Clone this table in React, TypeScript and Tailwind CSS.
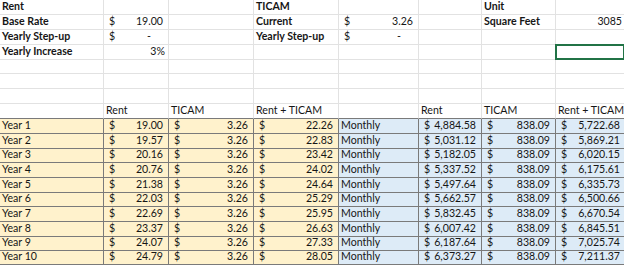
import React from "react";

type Cell =
  | { kind: "empty" }
  | { kind: "text"; v: string; bold?: boolean }
  | { kind: "money"; v: string }
  | { kind: "dash" }
  | { kind: "right"; v: string }
  | { kind: "select" };

const E: Cell = { kind: "empty" };
const txt = (v: string, bold?: boolean): Cell => ({ kind: "text", v, bold });
const money = (v: string): Cell => ({ kind: "money", v });
const right = (v: string): Cell => ({ kind: "right", v });

// sheet header block, rows 1-8
const topRows: Cell[][] = [
  [txt("Rent", true), E, E, txt("TICAM", true), E, E, txt("Unit", true), E],
  [txt("Base Rate", true), money("19.00"), E, txt("Current", true), money("3.26"), E, txt("Square Feet", true), right("3085")],
  [txt("Yearly Step-up", true), { kind: "dash" }, E, txt("Yearly Step-up", true), { kind: "dash" }, E, E, E],
  [txt("Yearly Increase", true), right("3%"), E, E, E, E, E, { kind: "select" }],
  [E, E, E, E, E, E, E, E],
  [E, E, E, E, E, E, E, E],
  [E, E, E, E, E, E, E, E],
  [E, txt("Rent"), txt("TICAM"), txt("Rent + TICAM"), E, txt("Rent"), txt("TICAM"), txt("Rent + TICAM")],
];
const topShort = [false, false, false, false, true, false, false, false];

const years = [
  ["19.00", "22.26", "4,884.58", "5,722.68"],
  ["19.57", "22.83", "5,031.12", "5,869.21"],
  ["20.16", "23.42", "5,182.05", "6,020.15"],
  ["20.76", "24.02", "5,337.52", "6,175.61"],
  ["21.38", "24.64", "5,497.64", "6,335.73"],
  ["22.03", "25.29", "5,662.57", "6,500.66"],
  ["22.69", "25.95", "5,832.45", "6,670.54"],
  ["23.37", "26.63", "6,007.42", "6,845.51"],
  ["24.07", "27.33", "6,187.64", "7,025.74"],
  ["24.79", "28.05", "6,373.27", "7,211.37"],
];
const dataShort = [false, false, true, false, false, true, false, false, true, true];

function Content({ c }: { c: Cell }) {
  if (c.kind === "text")
    return <span className={`pl-[2px] whitespace-nowrap ${c.bold ? "font-bold" : ""}`}>{c.v}</span>;
  if (c.kind === "money")
    return (
      <div className="flex w-full justify-between pl-[5px] pr-[5px]">
        <span>$</span>
        <span>{c.v}</span>
      </div>
    );
  if (c.kind === "dash")
    return (
      <div className="flex w-full justify-between pl-[5px] pr-[17px]">
        <span>$</span>
        <span>-</span>
      </div>
    );
  if (c.kind === "right")
    return <div className="w-full pr-[3px] text-right">{c.v}</div>;
  return null;
}

export default function App() {
  return (
    <div
      className="w-[624px] h-[265px] overflow-hidden bg-white text-[#161616] text-[10.6px]"
      style={{ fontFamily: "Lato, 'Liberation Sans', sans-serif" }}
    >
      <div className="grid w-[626px] grid-cols-[104px_65px_85px_85px_80px_63px_74px_70px]">
        {topRows.map((row, ri) =>
          row.map((c, ci) => {
            const h = topShort[ri] ? "h-[14px]" : "h-[15px]";
            const dataHead = ri === 7;
            return (
              <div
                key={`t${ri}-${ci}`}
                className={`relative flex items-end leading-[13px] pb-[1px] ${h} border-r border-b ${
                  dataHead ? "border-r-[#e2e2e2] border-b-[#7a7a7a]" : "border-[#e2e2e2]"
                }`}
              >
                <Content c={c} />
                {c.kind === "select" && (
                  <div className="absolute -left-[1px] -top-[1px] right-0 bottom-[-1px] border-2 border-[#217346]" />
                )}
              </div>
            );
          })
        )}
        {years.map((y, i) => {
          const h = dataShort[i] ? "h-[14px]" : "h-[15px]";
          const base = `flex items-end leading-[13px] pb-[1px] ${h} border-r border-b border-[#7a7a7a]`;
          const yel = `${base} bg-[#fff2cc]`;
          const blu = `${base} bg-[#ddebf7]`;
          return (
            <React.Fragment key={i}>
              <div className={yel}>
                <Content c={txt(`Year ${i + 1}`)} />
              </div>
              <div className={yel}>
                <Content c={money(y[0])} />
              </div>
              <div className={yel}>
                <Content c={money("3.26")} />
              </div>
              <div className={yel}>
                <Content c={money(y[1])} />
              </div>
              <div className={blu}>
                <Content c={txt("Monthly")} />
              </div>
              <div className={blu}>
                <Content c={money(y[2])} />
              </div>
              <div className={blu}>
                <Content c={money("838.09")} />
              </div>
              <div className={blu}>
                <Content c={money(y[3])} />
              </div>
            </React.Fragment>
          );
        })}
      </div>
    </div>
  );
}
